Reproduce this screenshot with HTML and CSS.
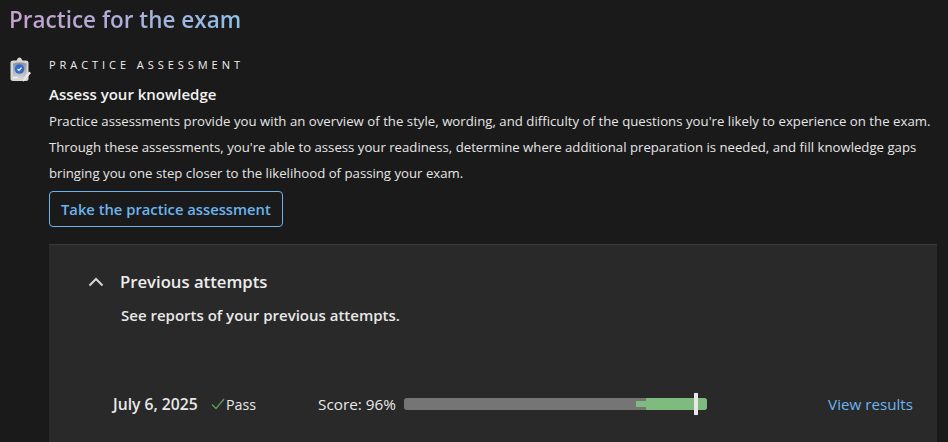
FILE: index.html
```html
<!DOCTYPE html>
<html>
<head>
    <title>Practice for the exam</title>
    <link rel="stylesheet" href="styles.css">
</head>
<body>
    <h2 class="page-title"><span>Practice for the exam</span></h2>
    <div class="assess">
        <svg class="assess-icon" width="22" height="26" viewBox="0 0 22 26">
            <defs>
                <linearGradient id="clip" x1="0" y1="0" x2="0" y2="1">
                    <stop offset="0" stop-color="#8e8e96"/>
                    <stop offset="1" stop-color="#d2d2d2"/>
                </linearGradient>
            </defs>
            <path d="M3 3.500h3.500L8 1c.7-.8 2.300-.8 3 0l1.500 2.500H16c1.200 0 2.500.8 2.500 2V22c0 1.200-1 2-2.500 2H3c-1.200 0-2.500-.8-2.500-2V5.500c0-1.200 1.300-2 2.500-2z" fill="#d6d6d6"/>
            <path d="M3 6.500c3-1.500 10-1.500 13.500 0v14.500H3z" fill="url(#clip)"/>
            <circle cx="9.500" cy="12" r="4.800" fill="#2f6fd0"/>
            <path d="M7.500 12l1.500 1.500 2.500-2.800" fill="none" stroke="#fff" stroke-width="1.200"/>
            <path d="M3 20.500h5" stroke="#f2f2f2" stroke-width="1.500"/>
            <path d="M13 25l1-4.500 5-6 2 1.500-5 6z" fill="#e8e8e8"/>
        </svg>
        <div class="assess-body">
            <p class="eyebrow">PRACTICE ASSESSMENT</p>
            <h3 class="assess-title">Assess your knowledge</h3>
            <p class="assess-text"><span class="first-line">Practice assessments provide you with an overview of the style, wording, and difficulty of the questions you're likely to experience on the exam.</span> Through these assessments, you're able to assess your readiness, determine where additional preparation is needed, and fill knowledge gaps bringing you one step closer to the likelihood of passing your exam.</p>
            <a class="take-btn" href="#">Take the practice assessment</a>
            <div class="attempts">
                <div class="attempts-head">
                    <svg class="chevron" width="16" height="10" viewBox="0 0 16 10"><path d="M1.500 8.500L8 2l6.500 6.500" fill="none" stroke="#d6d6d6" stroke-width="2"/></svg>
                    <span class="attempts-title">Previous attempts</span>
                </div>
                <p class="attempts-sub">See reports of your previous attempts.</p>
                <div class="attempt-row">
                    <span class="attempt-date">July 6, 2025</span>
                    <span class="attempt-pass">
                        <svg width="14" height="12" viewBox="0 0 14 12"><path d="M1 6.500L5 10.500 13 1" fill="none" stroke="#5a9e5f" stroke-width="1.200"/></svg>
                        Pass
                    </span>
                    <span class="attempt-score">Score: 96%</span>
                    <div class="score-bar">
                        <div class="score-fill"></div>
                        <div class="score-stub"></div>
                        <div class="score-mark"></div>
                    </div>
                    <a class="view-link" href="#">View results</a>
                </div>
            </div>
        </div>
    </div>
</body>
</html>
```
FILE: styles.css
```css
html, body {
    height: 100%;
}
body {
    margin: 0;
    background-color: #1a1a1a;
    color: #e8e8e8;
    font-family: "Open Sans", sans-serif;
    overflow: hidden;
}
.page-title {
    margin: 0;
    padding: 4px 0 0 9px;
    height: 46px;
    font-size: 22.500px;
    line-height: 32px;
    font-weight: 600;
}
.page-title span {
    background: linear-gradient(90deg, #c8a0cc, #8fbfe8);
    -webkit-background-clip: text;
    background-clip: text;
    color: transparent;
}
.assess {
    display: flex;
    padding-left: 10px;
    padding-right: 11px;
}
.assess-icon {
    flex: none;
    margin-top: 7px;
}
.assess-body {
    flex: 1;
    margin-left: 17px;
}
.eyebrow {
    margin: 7px 0 0;
    font-size: 11px;
    line-height: 16px;
    letter-spacing: 3.950px;
    color: #f0f0f0;
}
.assess-title {
    margin: 11px 0 0;
    font-size: 15px;
    line-height: 20px;
    font-weight: 600;
    color: #f2f2f2;
}
.assess-text {
    margin: 4px 0 0;
    width: 888px;
    font-size: 13.200px;
    line-height: 26px;
    color: #e6e6e6;
}
.first-line {
    display: block;
    letter-spacing: 0.020px;
    white-space: nowrap;
}
.take-btn {
    display: inline-block;
    margin-top: 5px;
    padding: 0 11px;
    height: 34px;
    line-height: 34px;
    border: 1px solid #6cb4ee;
    border-radius: 4px;
    font-size: 14.750px;
    font-weight: 600;
    color: #6cb4ee;
    text-decoration: none;
}
.attempts {
    margin-top: 17px;
    height: 198px;
    padding-top: 25px;
    background-color: #292929;
    border-top: 1px solid #3b3b3b;
    box-sizing: border-box;
}
.attempts-head {
    display: flex;
    align-items: center;
    padding-left: 39px;
    gap: 16px;
}
.attempts-title {
    font-size: 16.700px;
    line-height: 24px;
    font-weight: 600;
    color: #ededed;
}
.attempts-sub {
    margin: 11px 0 0 72px;
    font-size: 15px;
    line-height: 20px;
    font-weight: 600;
    color: #e8e8e8;
}
.attempt-row {
    display: flex;
    align-items: center;
    margin-top: 68px;
    padding: 0 24px 0 64px;
}
.attempt-date {
    font-size: 15.700px;
    font-weight: 600;
    width: 98px;
    white-space: nowrap;
}
.attempt-pass {
    display: flex;
    align-items: center;
    gap: 1px;
    width: 107px;
    font-size: 14.300px;
}
.attempt-score {
    font-size: 15.300px;
    width: 86px;
    white-space: nowrap;
}
.score-bar {
    position: relative;
    width: 303px;
    height: 12px;
    border-radius: 3px;
    background-color: #757575;
}
.score-fill {
    position: absolute;
    top: 0;
    bottom: 0;
    left: 242px;
    right: 0;
    border-radius: 0 3px 3px 0;
    background-color: #7fbb7f;
}
.score-stub {
    position: absolute;
    top: 3px;
    left: 232px;
    width: 10px;
    height: 6px;
    background-color: #7fbb7f;
}
.score-mark {
    position: absolute;
    top: -5px;
    left: 290px;
    width: 4px;
    height: 22px;
    background-color: #e8e8e8;
}
.view-link {
    margin-left: auto;
    font-size: 15.200px;
    color: #6cb4ee;
    text-decoration: none;
}
```
